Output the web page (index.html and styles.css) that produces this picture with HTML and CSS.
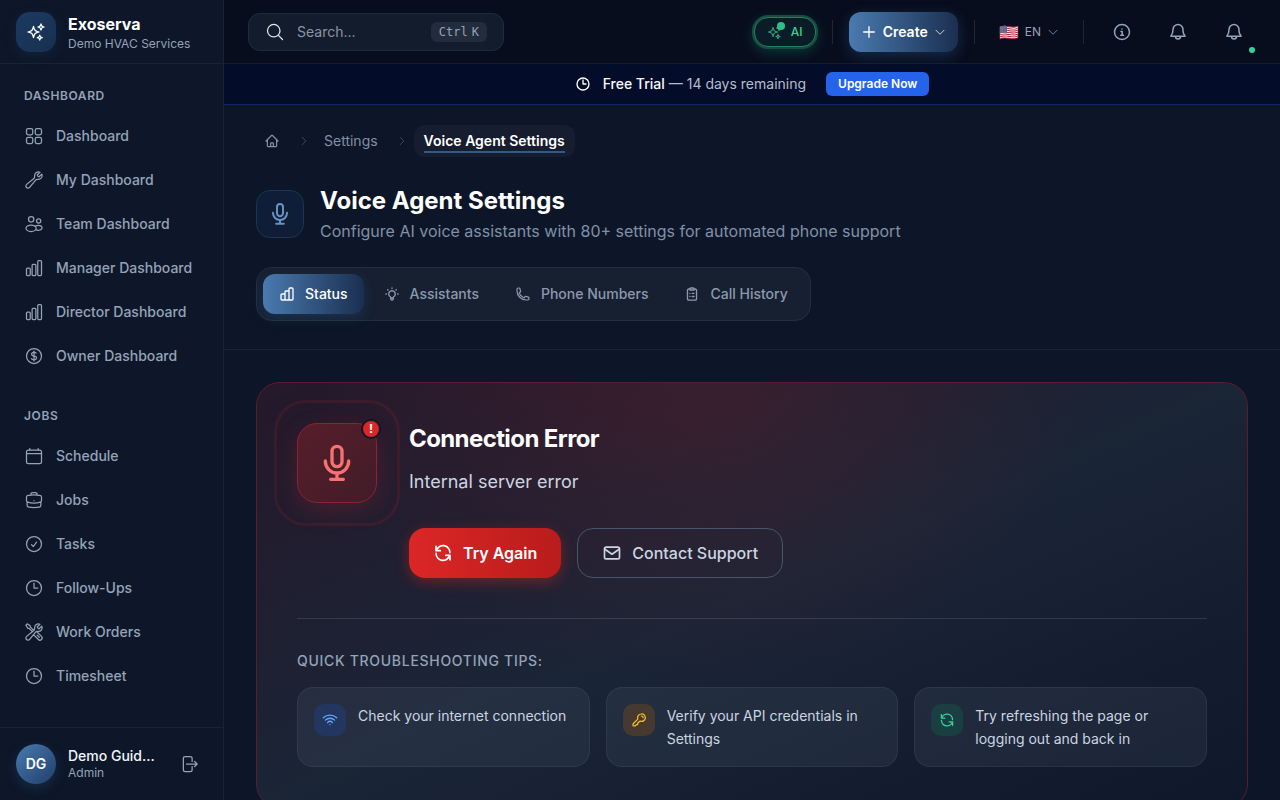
FILE: index.html
```html
<!DOCTYPE html>
<html lang="en">
<head>
<meta charset="utf-8">
<meta name="viewport" content="width=device-width, initial-scale=1">
<title>Voice Agent Settings</title>
<link rel="stylesheet" href="styles.css">
</head>
<body>
<svg class="sprite" aria-hidden="true">
  <symbol id="i-sparkles" viewBox="0 0 24 24"><path d="M9.813 15.904 9 18.75l-.813-2.846a4.5 4.5 0 0 0-3.09-3.09L2.25 12l2.846-.813a4.5 4.5 0 0 0 3.09-3.09L9 5.25l.813 2.846a4.5 4.5 0 0 0 3.09 3.09L15.75 12l-2.846.813a4.5 4.5 0 0 0-3.09 3.09ZM18.259 8.715 18 9.75l-.259-1.035a3.375 3.375 0 0 0-2.455-2.456L14.25 6l1.036-.259a3.375 3.375 0 0 0 2.455-2.456L18 2.25l.259 1.035a3.375 3.375 0 0 0 2.456 2.456L21.75 6l-1.035.259a3.375 3.375 0 0 0-2.456 2.456ZM16.894 20.567 16.5 21.75l-.394-1.183a2.25 2.25 0 0 0-1.423-1.423L13.5 18.75l1.183-.394a2.25 2.25 0 0 0 1.423-1.423l.394-1.183.394 1.183a2.25 2.25 0 0 0 1.423 1.423l1.183.394-1.183.394a2.25 2.25 0 0 0-1.423 1.423Z"/></symbol>
  <symbol id="i-grid" viewBox="0 0 24 24"><rect x="3" y="3" width="7.5" height="7.5" rx="2"/><rect x="13.5" y="3" width="7.5" height="7.5" rx="2"/><rect x="3" y="13.5" width="7.5" height="7.5" rx="2"/><rect x="13.5" y="13.5" width="7.5" height="7.5" rx="2"/></symbol>
  <symbol id="i-wrench" viewBox="0 0 24 24"><path d="M21.75 6.75a4.5 4.5 0 0 1-4.884 4.484c-1.076-.091-2.264.071-2.95.904l-7.152 8.684a2.548 2.548 0 1 1-3.586-3.586l8.684-7.152c.833-.686.995-1.874.904-2.95a4.5 4.5 0 0 1 6.336-4.486l-3.276 3.276a3.004 3.004 0 0 0 2.25 2.25l3.276-3.276c.256.565.398 1.192.398 1.852Z"/></symbol>
  <symbol id="i-users" viewBox="0 0 24 24"><circle cx="8.6" cy="6.4" r="3.2"/><circle cx="17.6" cy="8.4" r="2.5"/><ellipse cx="8.5" cy="17.2" rx="6.1" ry="3.8"/><path d="M13.200 14.700c1.100-.7 2.300-1.100 3.900-1.100 2.700 0 4.500 1.400 4.500 3s-1.800 2.900-4.500 2.900c-1 0-2-.1-2.900-.5"/></symbol>
  <symbol id="i-chart" viewBox="0 0 24 24"><rect x="3" y="12" width="4.500" height="9" rx="1.100"/><rect x="9.750" y="7.500" width="4.500" height="13.500" rx="1.100"/><rect x="16.500" y="3" width="4.500" height="18" rx="1.100"/></symbol>
  <symbol id="i-dollar" viewBox="0 0 24 24"><path d="M12 6v12m-3-2.818.879.659c1.171.879 3.070.879 4.242 0 1.172-.879 1.172-2.303 0-3.182C13.536 12.219 12.768 12 12 12c-.725 0-1.450-.22-2.003-.659-1.106-.879-1.106-2.303 0-3.182s2.900-.879 4.006 0l.415.33M21 12a9 9 0 1 1-18 0 9 9 0 0 1 18 0Z"/></symbol>
  <symbol id="i-calendar" viewBox="0 0 24 24"><rect x="3" y="5" width="18" height="16" rx="2.250"/><path d="M7 3v2M17 3v2M3 9h18"/></symbol>
  <symbol id="i-briefcase" viewBox="0 0 24 24"><path d="M20.250 14.150v4.250c0 1.094-.787 2.036-1.872 2.180-2.087.277-4.216.42-6.378.42s-4.291-.143-6.378-.42c-1.085-.144-1.872-1.086-1.872-2.180v-4.250m16.500 0a2.180 2.180 0 0 0 .75-1.661V8.706c0-1.081-.768-2.015-1.837-2.175a48.114 48.114 0 0 0-3.413-.387m4.500 8.006c-.194.165-.42.295-.673.38A23.978 23.978 0 0 1 12 15.750c-2.648 0-5.195-.429-7.577-1.220a2.016 2.016 0 0 1-.673-.38m0 0A2.180 2.180 0 0 1 3 12.489V8.706c0-1.081.768-2.015 1.837-2.175a48.111 48.111 0 0 1 3.413-.387m7.500 0V5.250A2.250 2.250 0 0 0 13.500 3h-3a2.250 2.250 0 0 0-2.250 2.250v.894m7.500 0a48.667 48.667 0 0 0-7.500 0M12 12.750h.008v.008H12v-.008Z"/></symbol>
  <symbol id="i-check" viewBox="0 0 24 24"><path d="M9 12.750 11.250 15 15 9.750M21 12a9 9 0 1 1-18 0 9 9 0 0 1 18 0Z"/></symbol>
  <symbol id="i-clock" viewBox="0 0 24 24"><path d="M12 6v6h4.500m4.500 0a9 9 0 1 1-18 0 9 9 0 0 1 18 0Z"/></symbol>
  <symbol id="i-tools" viewBox="0 0 24 24"><path d="M11.420 15.170 17.250 21A2.652 2.652 0 0 0 21 17.250l-5.877-5.877M11.420 15.170l2.496-3.030c.317-.384.74-.626 1.208-.766M11.420 15.170l-4.655 5.653a2.548 2.548 0 1 1-3.586-3.586l6.837-5.630m5.108-.233c.55-.164 1.163-.188 1.743-.14a4.500 4.500 0 0 0 4.486-6.336l-3.276 3.277a3.004 3.004 0 0 1-2.250-2.250l3.276-3.276a4.500 4.500 0 0 0-6.336 4.486c.091 1.076-.071 2.264-.904 2.950l-.102.085m-1.745 1.437L5.909 7.500H4.500L2.250 3.750l1.500-1.500L7.500 4.500v1.409l4.260 4.260m-1.745 1.437 1.745-1.437m6.615 8.206L15.750 15.750"/></symbol>
  <symbol id="i-logout" viewBox="0 0 24 24"><path d="M15.750 9V5.250A2.250 2.250 0 0 0 13.500 3h-6a2.250 2.250 0 0 0-2.250 2.250v13.500A2.250 2.250 0 0 0 7.500 21h6a2.250 2.250 0 0 0 2.250-2.250V15m3 0 3-3m0 0-3-3m3 3H9"/></symbol>
  <symbol id="i-search" viewBox="0 0 24 24"><path d="m21 21-5.197-5.197m0 0A7.500 7.500 0 1 0 5.196 5.196a7.500 7.500 0 0 0 10.607 10.607Z"/></symbol>
  <symbol id="i-plus" viewBox="0 0 24 24"><path d="M12 4v16m8-8H4"/></symbol>
  <symbol id="i-down" viewBox="0 0 24 24"><path d="m20 8.500-8 8-8-8"/></symbol>
  <symbol id="i-right" viewBox="0 0 24 24"><path d="m8.250 4.500 7.500 7.500-7.500 7.500"/></symbol>
  <symbol id="i-info" viewBox="0 0 24 24"><path d="M10.750 11.250h1.500v4.500m-1.750 0h3.300M21 12a9 9 0 1 1-18 0 9 9 0 0 1 18 0Zm-9-3.750h.008v.008H12V8.250Z"/></symbol>
  <symbol id="i-bell" viewBox="0 0 24 24"><path d="M12 3a6 6 0 0 0-6 6c0 4-1 6-2.500 8h17c-1.500-2-2.500-4-2.500-6V9a6 6 0 0 0-6-6ZM9 17.500a3 3 0 0 0 6 0"/></symbol>
  <symbol id="i-home" viewBox="-1 -1 26 26"><path d="m2.250 12 8.954-8.955c.44-.439 1.152-.439 1.591 0L21.750 12M4.500 9.750v10.125c0 .621.504 1.125 1.125 1.125H9.750v-4.875c0-.621.504-1.125 1.125-1.125h2.250c.621 0 1.125.504 1.125 1.125V21h4.125c.621 0 1.125-.504 1.125-1.125V9.750M8.250 21h8.250"/></symbol>
  <symbol id="i-mic" viewBox="0 0 24 24"><path d="M5 10.800V11a7 7 0 0 0 14 0v-.2M12 18v3.800M8.200 21.800h7.600M12 14.200a3 3 0 0 1-3-3V5a3 3 0 1 1 6 0v6.200a3 3 0 0 1-3 3Z"/></symbol>
  <symbol id="i-steps" viewBox="0 0 24 24"><path d="M3 13.500a1.500 1.500 0 0 1 1.500-1.500H9v9H4.500A1.500 1.500 0 0 1 3 19.500ZM9 9a1.500 1.500 0 0 1 1.500-1.500H15V21H9ZM15 4.500A1.500 1.500 0 0 1 16.500 3h3A1.500 1.500 0 0 1 21 4.500v15a1.500 1.500 0 0 1-1.500 1.500H15Z"/></symbol>
  <symbol id="i-bulb" viewBox="0 0 24 24"><path d="M10 16.500a4.900 4.900 0 1 1 4 0V19a2 2 0 0 1-4 0ZM10 18h4M12 2.800v.8M2.800 12h.8M20.400 12h.8M5.500 5.500l.6.6M18.500 5.500l-.6.6"/></symbol>
  <symbol id="i-phone" viewBox="-1 -1 26 26"><path d="M2.250 6.750c0 8.284 6.716 15 15 15h2.250a2.250 2.250 0 0 0 2.250-2.250v-1.372c0-.516-.351-.966-.852-1.091l-4.423-1.106c-.44-.11-.902.055-1.173.417l-.97 1.293c-.282.376-.769.542-1.210.38a12.035 12.035 0 0 1-7.143-7.143c-.162-.441.004-.928.38-1.210l1.293-.97c.363-.271.527-.734.417-1.173L6.963 3.102a1.125 1.125 0 0 0-1.091-.852H4.500A2.250 2.250 0 0 0 2.250 4.500v2.250Z"/></symbol>
  <symbol id="i-clipboard" viewBox="0 0 24 24"><path d="M8.800 4.500H7A1.800 1.800 0 0 0 5.200 6.300v13A1.800 1.800 0 0 0 7 21.100h10a1.800 1.800 0 0 0 1.800-1.800v-13A1.800 1.800 0 0 0 17 4.500h-1.800M8.800 4.500A1.500 1.500 0 0 1 10.300 3h3.400a1.500 1.500 0 0 1 1.500 1.500V6H8.800ZM12.200 11H15M12.200 15.700H15M8.900 11h.1M8.900 15.700h.1"/></symbol>
  <symbol id="i-refresh" viewBox="0 0 24 24"><path d="M3.600 4v5.200h5.200M20.400 20v-5.200h-5.200M4 9.200a8.300 8.300 0 0 1 16.300 2.300M20 14.800a8.300 8.300 0 0 1-16.300-2.300"/></symbol>
  <symbol id="i-mail" viewBox="0 0 24 24"><rect x="3" y="5" width="18" height="14" rx="2"/><path d="m3.500 7.500 8.500 6 8.500-6"/></symbol>
  <symbol id="i-wifi" viewBox="0 0 24 24"><path d="M1.900 8.700c5.600-5.200 14.600-5.200 20.200 0M5.100 12.200c3.900-3.700 9.900-3.700 13.800 0M8.400 15.700c2.100-2 5.100-2 7.200 0M12 19h.01"/></symbol>
  <symbol id="i-key" viewBox="-1 -1 26 26"><path d="M15.750 2.250a6 6 0 0 0-5.800 7.600c.1.400 0 .8-.3 1.100L2.900 17.700c-.4.400-.7 1-.7 1.600v1.300c0 .6.500 1.100 1.100 1.100h1.500c.6 0 1.200-.2 1.600-.7l1.400-1.500h2v-2.200l3.300-3.200c.3-.3.700-.4 1.100-.3a6 6 0 1 0 1.550-11.550ZM15.750 5.500a3 3 0 0 1 3 3"/></symbol>
</svg>

<div class="app">
  <aside class="sidebar">
    <div class="brand">
      <span class="brand-logo"><svg class="icon s20"><use href="#i-sparkles"/></svg></span>
      <div>
        <div class="brand-name">Exoserva</div>
        <div class="brand-sub">Demo HVAC Services</div>
      </div>
    </div>
    <nav class="nav" aria-label="Main">
      <section class="nav-group">
        <h2 class="nav-label">DASHBOARD</h2>
        <a class="nav-item" href="#"><svg class="icon s20"><use href="#i-grid"/></svg>Dashboard</a>
        <a class="nav-item" href="#"><svg class="icon s20"><use href="#i-wrench"/></svg>My Dashboard</a>
        <a class="nav-item" href="#"><svg class="icon s20"><use href="#i-users"/></svg>Team Dashboard</a>
        <a class="nav-item" href="#"><svg class="icon s20"><use href="#i-chart"/></svg>Manager Dashboard</a>
        <a class="nav-item" href="#"><svg class="icon s20"><use href="#i-chart"/></svg>Director Dashboard</a>
        <a class="nav-item" href="#"><svg class="icon s20"><use href="#i-dollar"/></svg>Owner Dashboard</a>
      </section>
      <section class="nav-group">
        <h2 class="nav-label">JOBS</h2>
        <a class="nav-item" href="#"><svg class="icon s20"><use href="#i-calendar"/></svg>Schedule</a>
        <a class="nav-item" href="#"><svg class="icon s20"><use href="#i-briefcase"/></svg>Jobs</a>
        <a class="nav-item" href="#"><svg class="icon s20"><use href="#i-check"/></svg>Tasks</a>
        <a class="nav-item" href="#"><svg class="icon s20"><use href="#i-clock"/></svg>Follow-Ups</a>
        <a class="nav-item" href="#"><svg class="icon s20"><use href="#i-tools"/></svg>Work Orders</a>
        <a class="nav-item" href="#"><svg class="icon s20"><use href="#i-clock"/></svg>Timesheet</a>
      </section>
    </nav>
    <div class="account">
      <span class="avatar">DG</span>
      <div class="account-text">
        <div class="account-name">Demo Guid...</div>
        <div class="account-role">Admin</div>
      </div>
      <button class="icon-button logout" type="button" aria-label="Log out"><svg class="icon s20"><use href="#i-logout"/></svg></button>
    </div>
  </aside>

  <div class="page">
    <header class="topbar">
      <label class="search">
        <svg class="icon s20"><use href="#i-search"/></svg>
        <input class="search-input" type="text" placeholder="Search..." aria-label="Search">
        <kbd class="shortcut"><span>Ctrl</span><span>K</span></kbd>
      </label>
      <div class="actions">
        <button class="ai" type="button"><span class="ai-icon"><svg class="icon s16 bold"><use href="#i-sparkles"/></svg><span class="ai-dot"></span></span>AI</button>
        <span class="rule"></span>
        <button class="create" type="button"><svg class="icon s16 bolder"><use href="#i-plus"/></svg>Create<svg class="icon s12"><use href="#i-down"/></svg></button>
        <span class="rule"></span>
        <button class="lang" type="button"><span class="flag">🇺🇸</span>EN<svg class="icon s12"><use href="#i-down"/></svg></button>
        <span class="rule"></span>
        <div class="alerts">
          <button class="icon-button" type="button" aria-label="Help"><svg class="icon s20 bold"><use href="#i-info"/></svg></button>
          <button class="icon-button" type="button" aria-label="Alerts"><svg class="icon s20 bold"><use href="#i-bell"/></svg></button>
          <button class="icon-button" type="button" aria-label="Notifications"><svg class="icon s20 bold"><use href="#i-bell"/></svg><span class="online"></span></button>
        </div>
      </div>
    </header>

    <div class="trial">
      <svg class="icon s16 bolder"><use href="#i-clock"/></svg>
      <p class="trial-text"><strong>Free Trial</strong> — 14 days remaining</p>
      <button class="upgrade" type="button">Upgrade Now</button>
    </div>

    <main class="main">
      <div class="intro">
        <nav class="crumbs" aria-label="Breadcrumb">
          <a class="crumb-home" href="#" aria-label="Home"><svg class="icon s16 bolder"><use href="#i-home"/></svg></a>
          <span class="crumb-sep"><svg class="icon s12"><use href="#i-right"/></svg></span>
          <a class="crumb" href="#">Settings</a>
          <span class="crumb-sep"><svg class="icon s12"><use href="#i-right"/></svg></span>
          <span class="crumb-current" aria-current="page"><span class="crumb-text">Voice Agent Settings</span></span>
        </nav>
        <div class="heading">
          <span class="heading-icon"><svg class="icon s24 bolder"><use href="#i-mic"/></svg></span>
          <div>
            <h1 class="title">Voice Agent Settings</h1>
            <p class="subtitle">Configure AI voice assistants with 80+ settings for automated phone support</p>
          </div>
        </div>
        <div class="tabs" role="tablist">
          <button class="tab active" type="button" role="tab" aria-selected="true"><svg class="icon s16 bolder"><use href="#i-steps"/></svg>Status</button>
          <button class="tab" type="button" role="tab" aria-selected="false"><svg class="icon s16 bolder"><use href="#i-bulb"/></svg>Assistants</button>
          <button class="tab" type="button" role="tab" aria-selected="false"><svg class="icon s16 bolder"><use href="#i-phone"/></svg>Phone Numbers</button>
          <button class="tab" type="button" role="tab" aria-selected="false"><svg class="icon s16 bolder"><use href="#i-clipboard"/></svg>Call History</button>
        </div>
      </div>

      <div class="content">
        <section class="error-card">
          <div class="error-top">
            <div class="error-icon">
              <svg class="icon s40 bolder"><use href="#i-mic"/></svg>
              <span class="pulse"></span>
              <span class="error-badge">!</span>
            </div>
            <div>
              <h2 class="error-title">Connection Error</h2>
              <p class="error-message">Internal server error</p>
              <div class="error-actions">
                <button class="button primary" type="button"><svg class="icon s20 bolder"><use href="#i-refresh"/></svg>Try Again</button>
                <button class="button secondary" type="button"><svg class="icon s20 bolder"><use href="#i-mail"/></svg>Contact Support</button>
              </div>
            </div>
          </div>
          <div class="tips">
            <h3 class="tips-label">QUICK TROUBLESHOOTING TIPS:</h3>
            <ul class="tip-list">
              <li class="tip"><span class="tip-icon blue"><svg class="icon s16 bolder"><use href="#i-wifi"/></svg></span><span>Check your internet connection</span></li>
              <li class="tip"><span class="tip-icon amber"><svg class="icon s16 bolder"><use href="#i-key"/></svg></span><span>Verify your API credentials in Settings</span></li>
              <li class="tip"><span class="tip-icon green"><svg class="icon s16 bolder"><use href="#i-refresh"/></svg></span><span>Try refreshing the page or logging out and back in</span></li>
            </ul>
          </div>
        </section>
      </div>
    </main>
  </div>
</div>
</body>
</html>
```
FILE: styles.css
```css
*, *::before, *::after { box-sizing: border-box; }

body {
  margin: 0;
  background: #0f172a;
  color: #fff;
  font-family: Inter, "Liberation Sans", sans-serif;
  font-size: 14px;
  line-height: 20px;
}

h1, h2, h3, p, ul { margin: 0; padding: 0; font-weight: inherit; }
ul { list-style: none; }
a { color: inherit; text-decoration: none; }
button, input { border: 0; padding: 0; background: none; color: inherit; font: inherit; }
button { cursor: pointer; }

.sprite { position: absolute; width: 0; height: 0; }

.icon {
  flex: none;
  display: block;
  fill: none;
  stroke: currentColor;
  stroke-width: 1.5;
  stroke-linecap: round;
  stroke-linejoin: round;
}
.bold { stroke-width: 1.8; }
.bolder { stroke-width: 2; }
.s12 { width: 12px; height: 12px; }
.s16 { width: 16px; height: 16px; }
.s20 { width: 20px; height: 20px; }
.s24 { width: 24px; height: 24px; }
.s40 { width: 40px; height: 40px; }

.app { display: flex; height: 100vh; overflow: hidden; }

/* Sidebar */
.sidebar {
  flex: none;
  display: flex;
  flex-direction: column;
  width: 224px;
  background: #0e1729;
  border-right: 1px solid #1a2336;
}
.brand {
  display: flex;
  align-items: center;
  gap: 12px;
  height: 64px;
  padding: 0 16px;
  border-bottom: 1px solid #1a2336;
}
.brand-logo {
  display: grid;
  place-items: center;
  width: 40px;
  height: 40px;
  border-radius: 14px;
  background: linear-gradient(135deg, #1b3a63, #18304f);
  box-shadow: 0 4px 12px rgba(26, 54, 93, .3);
}
.brand-name { font-size: 16px; font-weight: 700; line-height: 24px; }
.brand-sub { color: #94a3b8; font-size: 12px; line-height: 16px; }

.nav { flex: 1; min-height: 0; padding: 24px 12px; overflow: hidden; }
.nav-group { display: flex; flex-direction: column; gap: 4px; margin-bottom: 32px; }
.nav-label {
  margin-bottom: 8px;
  padding-left: 12px;
  color: #94a3b8;
  font-size: 12px;
  font-weight: 600;
  line-height: 16px;
  letter-spacing: .05em;
}
.nav-item {
  display: flex;
  align-items: center;
  gap: 12px;
  height: 40px;
  padding: 0 12px;
  border-radius: 10px;
  color: #94a3b8;
  font-weight: 500;
}

.account {
  display: flex;
  align-items: center;
  gap: 12px;
  padding: 16px;
  border-top: 1px solid #1a2336;
}
.avatar {
  flex: none;
  display: grid;
  place-items: center;
  width: 40px;
  height: 40px;
  border-radius: 50%;
  background: linear-gradient(135deg, #4a7aaf, #1f3f6b);
  box-shadow: 0 4px 12px rgba(43, 87, 143, .3);
  font-weight: 600;
}
.account-text { flex: 1; min-width: 0; }
.account-name { font-weight: 500; line-height: 18px; color: #f1f5f9; white-space: nowrap; }
.account-role { color: #94a3b8; font-size: 12px; line-height: 16px; }
.icon-button {
  position: relative;
  display: grid;
  place-items: center;
  width: 44px;
  height: 44px;
  border-radius: 12px;
  color: #94a3b8;
}
.logout { width: 36px; height: 36px; }

/* Top bar */
.page { flex: 1; min-width: 0; display: flex; flex-direction: column; }
.topbar {
  flex: none;
  display: flex;
  align-items: center;
  justify-content: space-between;
  height: 64px;
  padding: 0 24px;
  background: #080d1d;
  border-bottom: 1px solid #141d2b;
}
.search {
  display: flex;
  align-items: center;
  gap: 12px;
  width: 256px;
  height: 38px;
  padding: 0 16px;
  border: 1px solid #1f2b3b;
  border-radius: 12px;
  background: #131c2c;
}
.search .icon { color: #e2e8f0; }
.search-input { flex: 1; min-width: 0; outline: none; }
.search-input::placeholder { color: #8a94a5; opacity: 1; }
.shortcut {
  display: flex;
  align-items: center;
  gap: 4px;
  height: 20px;
  padding: 0 8px;
  border-radius: 6px;
  background: #222c3c;
  color: #94a3b8;
  font: 12px "DejaVu Sans Mono", monospace;
}
.actions, .alerts { display: flex; align-items: center; gap: 16px; }
.alerts { gap: 12px; }
.rule { width: 1px; height: 24px; background: #1d2636; }
.ai {
  display: flex;
  align-items: center;
  gap: 8px;
  height: 30px;
  padding: 0 12px;
  border: 1px solid #23805f;
  border-radius: 14px;
  background: #0a1c26;
  box-shadow: 0 0 0 2px #154e40, 0 4px 14px rgba(16, 185, 129, .3);
  color: #34d399;
  font-size: 12px;
  font-weight: 500;
}
.ai-icon { position: relative; color: #2aa37c; }
.ai-dot {
  position: absolute;
  top: -2px;
  right: -2px;
  width: 8px;
  height: 8px;
  border-radius: 50%;
  background: #2fbd8b;
}
.create {
  display: flex;
  align-items: center;
  gap: 6px;
  height: 40px;
  padding: 0 12px;
  border-radius: 12px;
  background: linear-gradient(90deg, #4a7aaf, #1a2f50);
  box-shadow: 0 4px 14px rgba(43, 87, 143, .4);
  font-weight: 600;
}
.lang {
  display: flex;
  align-items: center;
  gap: 6px;
  padding: 8px;
  color: #94a3b8;
  font-size: 12px;
}
.flag { width: 20px; font-size: 16px; line-height: 20px; }
.online {
  position: absolute;
  right: 1px;
  bottom: 1px;
  width: 6px;
  height: 6px;
  border-radius: 50%;
  background: #34d399;
}

/* Trial banner */
.trial {
  flex: none;
  display: flex;
  align-items: center;
  justify-content: center;
  gap: 12px;
  padding: 8px 24px;
  background: #030c29;
  border-bottom: 1px solid #0d2768;
}
.trial-text { color: #b6bdcb; }
.trial-text strong { color: #f8fafc; font-weight: 500; }
.upgrade {
  margin-left: 8px;
  height: 24px;
  padding: 0 12px;
  border-radius: 6px;
  background: #2563eb;
  font-size: 12px;
  font-weight: 600;
}

/* Page intro */
.main { flex: 1; min-height: 0; overflow: hidden; background: #0d1628; }
.intro { padding: 20px 32px 28px; border-bottom: 1px solid #1a2436; }
.crumbs { display: flex; align-items: center; height: 32px; color: #8190a6; }
.crumb-home, .crumb { padding: 8px; }
.crumb-sep { display: grid; place-items: center; width: 24px; margin-left: 4px; color: #475569; }
.crumb-current { padding: 6px 10px; border-radius: 10px; background: #151d2e; color: #fff; font-weight: 600; }
.crumb-text { display: block; box-shadow: 0 2px 0 #31598a; line-height: 20px; }
.heading { display: flex; align-items: center; gap: 16px; margin-top: 28px; }
.heading-icon {
  display: grid;
  place-items: center;
  width: 48px;
  height: 48px;
  border: 1px solid #1c3356;
  border-radius: 14px;
  background: #101d36;
  color: #6792c4;
}
.title { font-size: 24px; font-weight: 700; line-height: 32px; }
.subtitle { margin-top: 2px; color: #8190a6; font-size: 16px; line-height: 24px; }
.tabs {
  display: flex;
  gap: 4px;
  width: fit-content;
  margin-top: 24px;
  padding: 6px;
  border: 1px solid #232f40;
  border-radius: 16px;
  background: #162031;
}
.tab {
  display: flex;
  align-items: center;
  gap: 10px;
  height: 40px;
  padding: 0 16px;
  border-radius: 12px;
  color: #8c99ad;
  font-weight: 500;
}
.tab.active {
  background: linear-gradient(90deg, #4a7aaf, #1a2f50);
  box-shadow: 0 4px 12px rgba(43, 87, 143, .3);
  color: #fff;
}

/* Error card */
.content { padding: 32px; }
.error-card {
  padding: 40px;
  border: 1px solid #551f2b;
  border-radius: 24px;
  background:
    radial-gradient(ellipse at 45% 0, rgba(160, 30, 40, .2), transparent 50%),
    linear-gradient(to bottom right, #25182a, #1a2536 50%, #0f172a);
}
.error-top { display: flex; gap: 32px; padding-bottom: 40px; border-bottom: 1px solid rgba(148, 163, 184, .2); }
.error-icon {
  position: relative;
  flex: none;
  display: grid;
  place-items: center;
  width: 80px;
  height: 80px;
  border: 1px solid #8c2430;
  border-radius: 20px;
  background: linear-gradient(135deg, #571d2a, #421c29);
  box-shadow: 0 8px 24px rgba(220, 38, 38, .2);
  color: #f87171;
}
.pulse {
  position: absolute;
  inset: -24px;
  border: 3px solid rgba(220, 38, 38, .12);
  border-radius: 32px;
}
.error-badge {
  position: absolute;
  top: -5px;
  right: -5px;
  display: grid;
  place-items: center;
  width: 20px;
  height: 20px;
  border: 2px solid #0f172a;
  border-radius: 50%;
  background: #dc2626;
  color: #fff;
  font-size: 12px;
  font-weight: 700;
  line-height: 16px;
}
.error-title { font-size: 24px; font-weight: 700; line-height: 32px; letter-spacing: -.025em; }
.error-message { margin-top: 12px; color: #cbd5e1; font-size: 18px; line-height: 29px; }
.error-actions { display: flex; gap: 16px; margin-top: 32px; }
.button {
  display: flex;
  align-items: center;
  gap: 10px;
  height: 50px;
  padding: 0 24px;
  border-radius: 16px;
  font-size: 16px;
  font-weight: 600;
}
.primary {
  background: linear-gradient(90deg, #dc2626, #b91c1c);
  box-shadow: 0 4px 14px rgba(220, 38, 38, .4);
}
.secondary { border: 1px solid #475569; color: #cbd5e1; font-weight: 500; }
.tips { padding-top: 32px; }
.tips-label { margin-bottom: 16px; color: #94a3b8; font-size: 14px; font-weight: 500; letter-spacing: .05em; }
.tip-list { display: grid; grid-template-columns: repeat(3, 1fr); gap: 16px; }
.tip {
  display: flex;
  gap: 12px;
  padding: 16px;
  border: 1px solid rgba(148, 163, 184, .1);
  border-radius: 16px;
  background: rgba(148, 163, 184, .09);
  color: #cbd5e1;
  line-height: 23px;
}
.tip-icon { flex: none; display: grid; place-items: center; width: 32px; height: 32px; border-radius: 10px; }
.blue { background: #233660; color: #60a5fa; }
.amber { background: #463930; color: #fbbf24; }
.green { background: #1b3e42; color: #34d399; }
```
